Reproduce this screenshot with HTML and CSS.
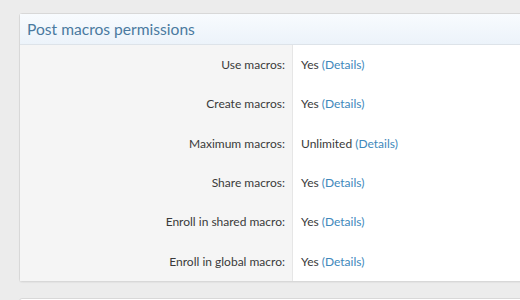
FILE: index.html
```html
<!DOCTYPE html>
<html>
<head>
<meta charset="utf-8">
<link rel="stylesheet" href="styles.css">
</head>
<body>
<div class="page">
  <div class="block">
    <h2 class="block-header">Post macros permissions</h2>
    <dl class="pairs">
      <dt>Use macros:</dt><dd>Yes <a href="#">(Details)</a></dd>
      <dt>Create macros:</dt><dd>Yes <a href="#">(Details)</a></dd>
      <dt>Maximum macros:</dt><dd>Unlimited <a href="#">(Details)</a></dd>
      <dt>Share macros:</dt><dd>Yes <a href="#">(Details)</a></dd>
      <dt>Enroll in shared macro:</dt><dd>Yes <a href="#">(Details)</a></dd>
      <dt>Enroll in global macro:</dt><dd>Yes <a href="#">(Details)</a></dd>
    </dl>
  </div>
  <div class="block next"></div>
</div>
</body>
</html>
```
FILE: styles.css
```css
html, body {
  margin: 0;
  padding: 0;
  background: #ececec;
  font-family: "Lato", "Noto Sans", sans-serif;
}
.page {
  padding: 13px 0 0 19px;
  overflow: hidden;
  height: 300px;
  box-sizing: border-box;
}
.block {
  width: 560px;
  border: 1px solid #d8d8d8;
  border-radius: 3px;
  background: #fff;
  box-shadow: 0 1px 1px rgba(0,0,0,0.04);
}
.block-header {
  margin: 0;
  height: 30px;
  padding: 0 0 0 7px;
  line-height: 31px;
  font-size: 15.6px;
  font-weight: normal;
  color: #4a7aa0;
  background: linear-gradient(#f8fbfe, #ecf3fa);
  border-bottom: 1px solid #dde3e9;
}
.pairs {
  margin: 0;
  display: grid;
  grid-template-columns: 273px 1fr;
  grid-auto-rows: 39.3px;
  font-size: 12px;
  color: #3a3a3a;
}
.pairs dt {
  background: #f5f5f5;
  border-right: 1px solid #e6e6e6;
  text-align: right;
  padding-right: 7px;
  display: flex;
  align-items: center;
  justify-content: flex-end;
}
.pairs dd {
  margin: 0;
  padding-left: 8px;
  display: flex;
  align-items: center;
  white-space: pre;
}
.pairs a {
  color: #4088bb;
  text-decoration: none;
}
.next {
  margin-top: 16px;
  height: 40px;
}
```
